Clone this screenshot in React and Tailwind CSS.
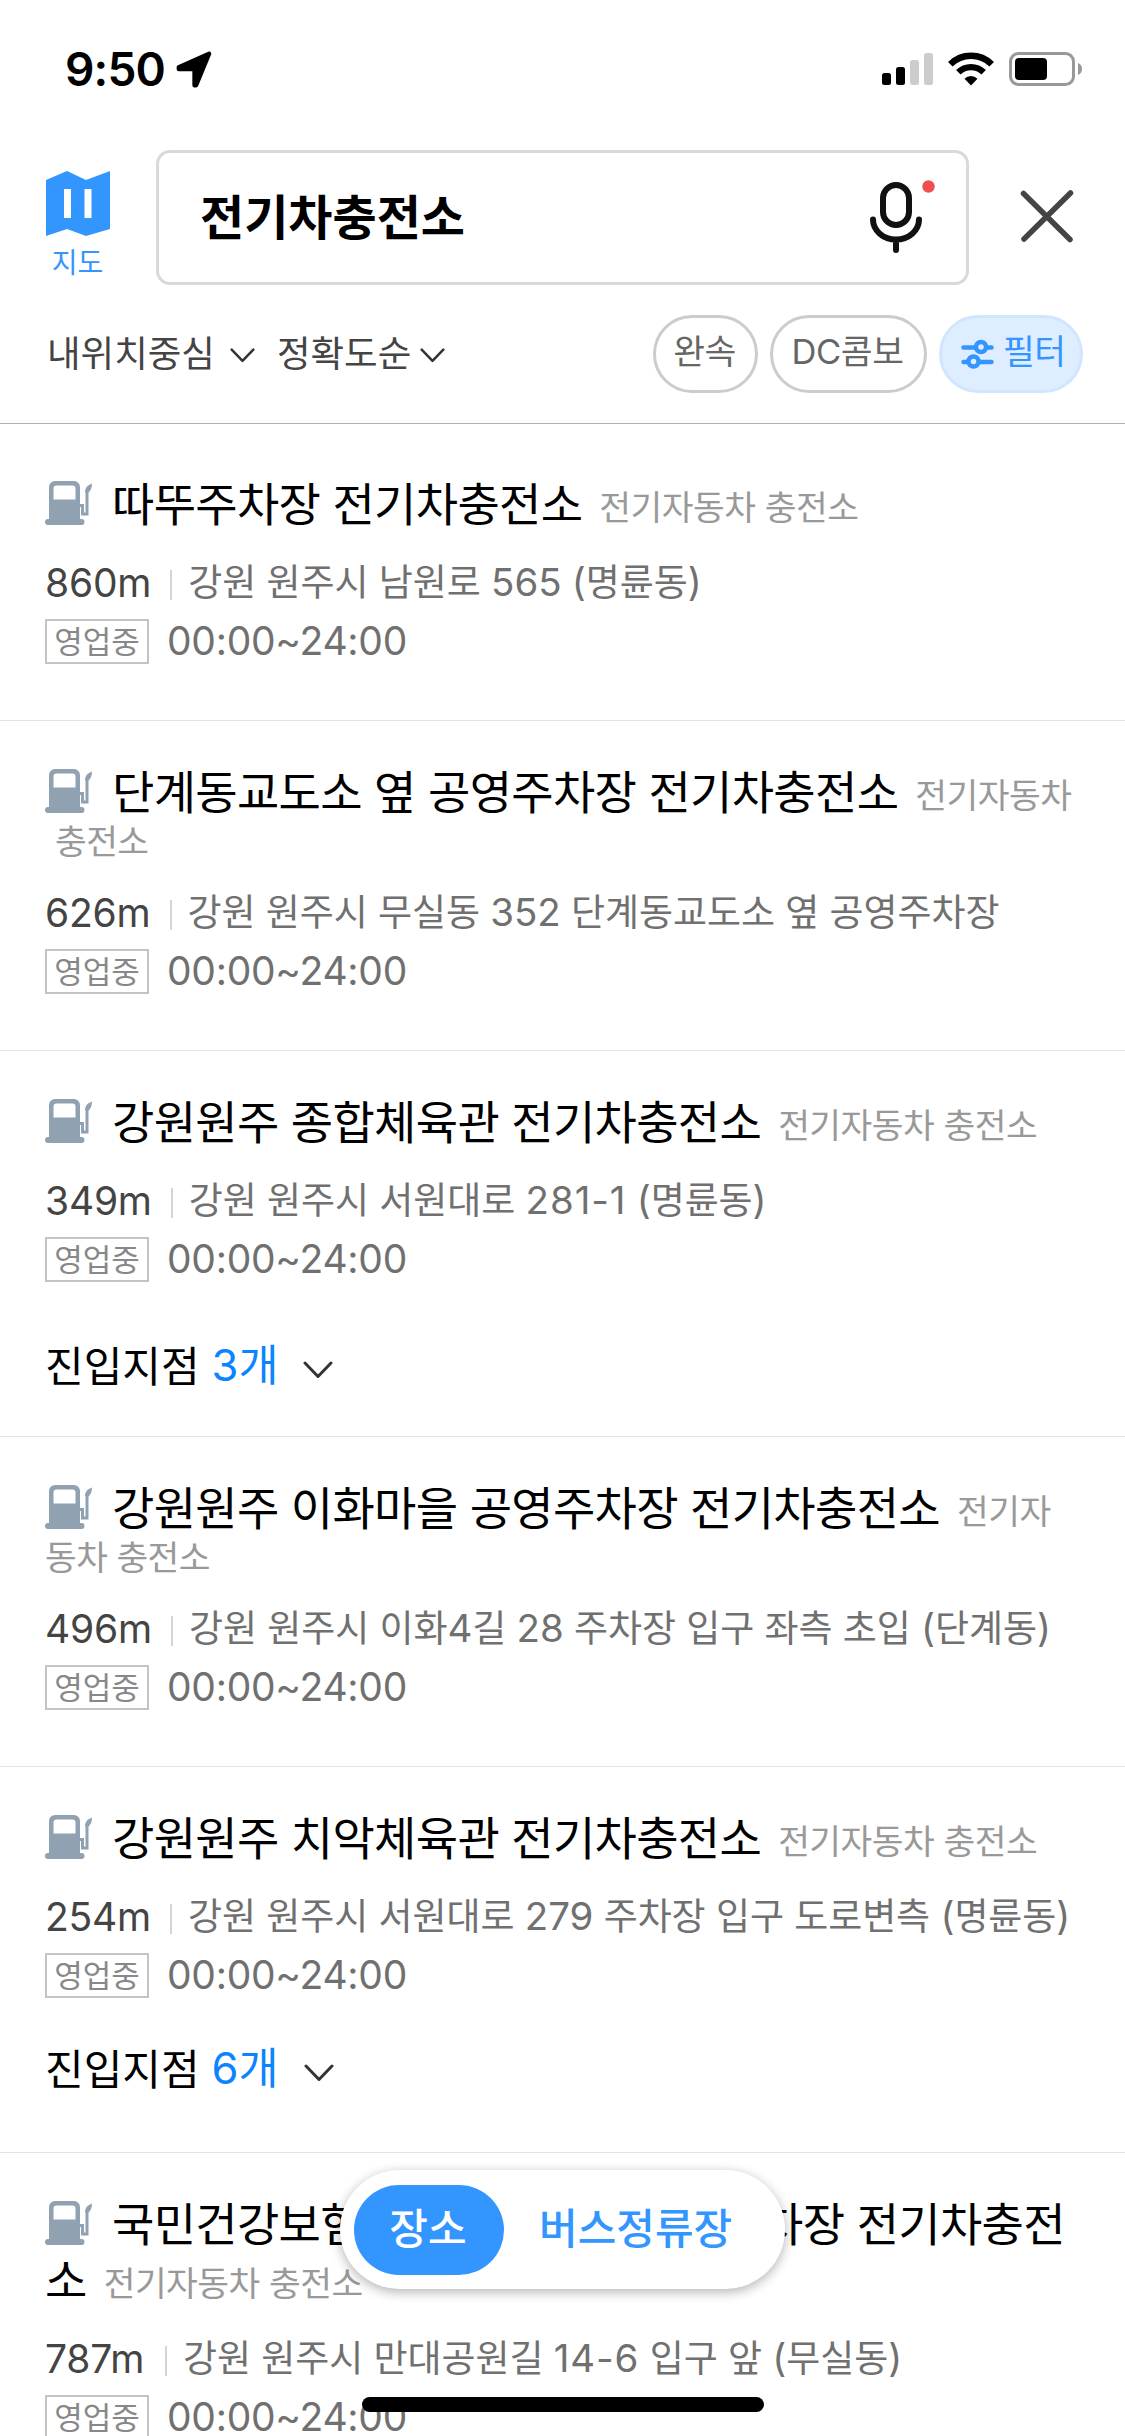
import React from "react";

const PLACES = [
  {
    name: "따뚜주차장 전기차충전소",
    category: "전기자동차 충전소",
    distance: "860m",
    address: "강원 원주시 남원로 565 (명륜동)",
  },
  {
    name: "단계동교도소 옆 공영주차장 전기차충전소",
    category: "전기자동차",
    categoryRest: "충전소",
    indentRest: true,
    distance: "626m",
    address: "강원 원주시 무실동 352 단계동교도소 옆 공영주차장",
  },
  {
    name: "강원원주 종합체육관 전기차충전소",
    category: "전기자동차 충전소",
    distance: "349m",
    address: "강원 원주시 서원대로 281-1 (명륜동)",
    entries: "3개",
    entriesSpacing: "mt-[49px] mb-[41px]",
  },
  {
    name: "강원원주 이화마을 공영주차장 전기차충전소",
    category: "전기자",
    categoryRest: "동차 충전소",
    distance: "496m",
    address: "강원 원주시 이화4길 28 주차장 입구 좌측 초입 (단계동)",
  },
  {
    name: "강원원주 치악체육관 전기차충전소",
    category: "전기자동차 충전소",
    distance: "254m",
    address: "강원 원주시 서원대로 279 주차장 입구 도로변측 (명륜동)",
    entries: "6개",
    entriesSpacing: "mt-[36px] mb-[54px]",
  },
  {
    name: "국민건강보험공단 원주횡성지사 주차장 전기차충전",
    nameRest: "소",
    category: "전기자동차 충전소",
    distance: "787m",
    address: "강원 원주시 만대공원길 14-6 입구 앞 (무실동)",
  },
];

// Digits and brackets are set slightly larger than the Hangul around them,
// lot numbers such as 281-1 also a little wider
const MixedText = ({ children }) =>
  children.split(/([0-9()-]+)/).map((part, i) =>
    i % 2 ? (
      <span key={i} className={part.includes("-") ? "text-[1.04em] tracking-[0.9px]" : "text-[1.04em]"}>
        {part}
      </span>
    ) : (
      part
    )
  );

const Chevron = ({ className }) => (
  <svg viewBox="0 0 30 18" className={className} fill="none" stroke="#333" strokeWidth="3" strokeLinecap="round" strokeLinejoin="round">
    <path d="M2 2 L15 15.5 L28 2" />
  </svg>
);

const PumpIcon = () => (
  <svg viewBox="0 0 47 44" className="mb-[3px] h-[44px] w-[47px] shrink-0" fill="none">
    <path
      fill="#90a2b1"
      fillRule="evenodd"
      d="M10 0h19a6 6 0 0 1 6 6v32h1.500a3 3 0 0 1 0 6H3a3 3 0 0 1 0-6h1V6a6 6 0 0 1 6-6ZM11.500 4.500a3 3 0 0 0-3 3V18.500h22V7.500a3 3 0 0 0-3-3Z"
    />
    <path d="M34 24.500h3.500v8.500h4.500V11" stroke="#90a2b1" strokeWidth="3" />
    <path d="M47 2.500c0 4-1 7-4.500 10l-2.500-1.500c0-4 2.500-7 7-8.500Z" fill="#90a2b1" />
  </svg>
);

const StatusBar = () => (
  <div className="flex h-[138px] items-center justify-between pl-[65px] pr-[43px]">
    <div className="flex items-center">
      <span className="text-[46px] font-semibold tracking-[-0.8px] text-black">9:50</span>
      <svg viewBox="0 0 36 36" className="ml-[10px] h-[39px] w-[39px]">
        <path
          d="M3.500 16 31.500 3.500 19.500 32.500 18 32.500V17.500H3.500Z"
          fill="black"
          stroke="black"
          strokeWidth="4"
          strokeLinejoin="round"
        />
      </svg>
    </div>
    <div className="flex items-center">
      <svg viewBox="0 0 51 34" className="h-[34px] w-[51px]">
        <rect x="0" y="21" width="9" height="12" rx="2.500" />
        <rect x="14" y="15" width="9" height="18" rx="2.500" />
        <rect x="28" y="8" width="9" height="25" rx="2.500" fill="#ccc" />
        <rect x="42" y="1" width="9" height="32" rx="2.500" fill="#ccc" />
      </svg>
      <svg viewBox="0 0 46 34" className="ml-[15px] h-[34px] w-[46px]" fill="none" stroke="black">
        <path d="M2.300 12.300a29.500 29.500 0 0 1 41.400 0" strokeWidth="6.500" />
        <path d="M10.300 20.300a18 18 0 0 1 25.400 0" strokeWidth="6.300" />
        <path d="M23 33.500 16.500 26.700a9.200 9.200 0 0 1 13 0Z" fill="black" stroke="none" />
      </svg>
      <svg viewBox="0 0 73 34" className="ml-[15px] h-[34px] w-[73px]">
        <rect x="1.500" y="1.500" width="63" height="31" rx="8" fill="none" stroke="#999" strokeWidth="3" />
        <rect x="6" y="6" width="32" height="22" rx="4" />
        <path d="M69 11a6.500 6.500 0 0 1 0 12Z" fill="#999" />
      </svg>
    </div>
  </div>
);

const SearchRow = () => (
  <div className="flex items-start pt-3">
    <button className="ml-[46px] mt-[21px] flex w-[64px] flex-col items-center">
      <svg viewBox="0 0 64 65" className="h-[65px] w-[64px]">
        <path d="M0 9 21 0 40 9 64 0V58L40 65 21 58 0 65Z" fill="#3396ff" />
        <path d="M18 18h7v29h-7zM38.500 18h7v29h-7z" fill="white" />
      </svg>
      <span className="mr-[1px] mt-[12px] text-[28px] leading-[30px] tracking-[-0.1px] text-[#3396ff]">지도</span>
    </button>
    <div className="ml-[46px] flex h-[135px] w-[813px] items-center justify-between rounded-[14px] border-3 border-[#d9d9d9] pl-[41px] pr-[30px]">
      <span className="text-[48px] font-bold text-black">전기차충전소</span>
      <svg viewBox="0 0 66 72" className="h-[72px] w-[66px] overflow-visible" fill="none" stroke="#111" strokeWidth="6" strokeLinecap="round">
        <rect x="13" y="3" width="26" height="40" rx="13" />
        <path d="M3 37.500a23 20 0 0 0 46 0M26 58v10" />
        <circle cx="58.500" cy="4.500" r="6.200" fill="#f24e4e" stroke="none" />
      </svg>
    </div>
    <svg viewBox="0 0 54 53" className="ml-[51px] mt-[40px] h-[53px] w-[54px]" stroke="#444" strokeWidth="5.500" strokeLinecap="round">
      <path d="M3.500 3.500 50 49.500M50.500 3 4 49" />
    </svg>
  </div>
);

const FilterRow = () => (
  <div className="mt-[30px] flex items-center pl-[47px] pr-[42px] text-[#444]">
    <span className="text-[36.500px]">내위치중심</span>
    <Chevron className="ml-[15px] mt-[3px] h-[15px] w-[25px]" />
    <span className="ml-[22px] text-[36.500px]">정확도순</span>
    <Chevron className="ml-[9px] mt-[3px] h-[15px] w-[25px]" />
    <div className="ml-auto flex gap-3 text-[34.500px] leading-none tracking-[-0.4px] text-[#666]">
      <button className="flex h-[78px] w-[105px] items-center justify-center rounded-full border-3 border-[#ccc] pb-1 pr-[2px]">
        완속
      </button>
      <button className="flex h-[78px] w-[157px] items-center justify-center rounded-full border-3 border-[#ccc] pb-1 pr-[2px]">
        DC콤보
      </button>
      <button className="flex h-[78px] w-[144px] items-center rounded-full border-3 border-[#d0e6ff] bg-[#deedff] pb-1 pl-[19px] text-[#3396ff]">
        <svg viewBox="0 0 33 30" className="mr-[9px] mt-1 h-[30px] w-[33px]" fill="none" stroke="#3396ff" strokeWidth="4.500" strokeLinecap="round">
          <path d="M2.500 8.500H14M26 8.500h4.500M2.500 23H6M18 23h12.500" />
          <circle cx="20" cy="8" r="5" />
          <circle cx="12.500" cy="22.500" r="5" />
        </svg>
        필터
      </button>
    </div>
  </div>
);

const PlaceItem = ({ place }) => (
  <li className="border-b border-[#e2e2e2] pl-[45px] pt-[43px]">
    <div className="flex h-[56px] items-center whitespace-nowrap">
      <PumpIcon />
      <span className="ml-[20px] text-[46px] tracking-[-0.68px] text-black">{place.name}</span>
      {!place.nameRest && (
        <span className="ml-[17px] mt-[7px] text-[34.500px] tracking-[-0.5px] text-[#999]">{place.category}</span>
      )}
    </div>
    {place.categoryRest && (
      <div className={`flex h-[42px] items-center pt-[2px] text-[34.500px] tracking-[-0.6px] text-[#999] ${place.indentRest ? "pl-[10px]" : ""}`}>
        {place.categoryRest}
      </div>
    )}
    {place.nameRest && (
      <div className="flex h-[56px] items-center">
        <span className="text-[46px] tracking-[-0.68px] text-black">{place.nameRest}</span>
        <span className="ml-[17px] mt-[7px] text-[34.500px] tracking-[-0.5px] text-[#999]">{place.category}</span>
      </div>
    )}
    <div className="mt-[22px] flex h-[58px] items-center whitespace-nowrap">
      <span className="min-w-[101px] text-[39px] tracking-[-0.2px] text-[#444]">{place.distance}</span>
      <span className="ml-[19px] mt-1 h-[30px] w-[2px] bg-[#d5d5d5]" />
      <span className="ml-[16px] text-[37px] tracking-[-0.07px] text-[#707070]">
        <MixedText>{place.address}</MixedText>
      </span>
    </div>
    <div className="flex h-[58px] items-center">
      <span className="flex h-[45px] w-[104px] items-center justify-center border-2 border-[#c4c4c4] text-[31px] leading-none text-[#888]">
        영업중
      </span>
      <span className="ml-[18px] text-[39px] tracking-[-0.27px] text-[#707070]">00:00~24:00</span>
    </div>
    {place.entries ? (
      <div className={`flex h-[58px] items-center text-[42px] ${place.entriesSpacing}`}>
        <span className="text-black">진입지점</span>
        <span className="ml-[12px] text-[43.500px] text-[#0a84ff]">{place.entries}</span>
        <Chevron className="ml-[25px] mt-[7px] h-[18px] w-[30px]" />
      </div>
    ) : (
      <div className="h-[50px]" />
    )}
  </li>
);

const BottomTabs = () => (
  <div className="absolute left-[340px] top-[2170px] flex h-[119px] w-[445px] items-center rounded-full bg-white pl-[14px] text-[42px] font-medium shadow-[0_3px_12px_rgba(0,0,0,0.3)]">
    <button className="flex h-[90px] w-[150px] items-center justify-center rounded-full bg-[#3396ff] pb-[2px] pr-[2px] text-white">장소</button>
    <button className="ml-[35px] pb-[2px] text-[#3396ff]">버스정류장</button>
  </div>
);

const App = () => {
  return (
    <div className='relative h-[2436px] w-[1125px] overflow-hidden bg-white font-["Inter","Noto_Sans_CJK_KR",sans-serif]'>
      <header className="h-[424px] border-b border-[#b0b0b0]">
        <StatusBar />
        <SearchRow />
        <FilterRow />
      </header>
      <ul className="pt-[9px]">
        {PLACES.map((place) => (
          <PlaceItem key={place.name} place={place} />
        ))}
      </ul>
      <BottomTabs />
      <div className="absolute left-[362px] top-[2397px] h-[15px] w-[402px] rounded-full bg-black" />
    </div>
  );
};

export default App;
